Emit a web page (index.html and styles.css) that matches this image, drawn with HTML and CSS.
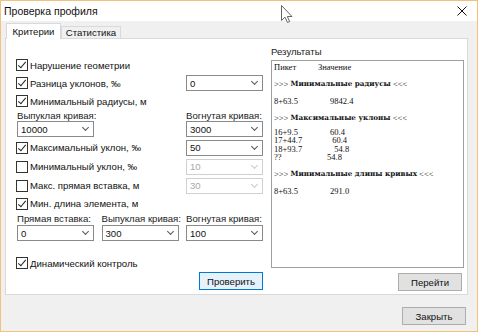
FILE: index.html
```html
<!DOCTYPE html>
<html lang="ru">
<head>
<meta charset="UTF-8">
<title>Проверка профиля</title>
<link rel="stylesheet" href="styles.css">
</head>
<body>

<div class="window">
<div class="titlebar">
<span class="title">Проверка профиля</span>
<svg class="close" width="10" height="10" viewBox="0 0 10 10"><path d="M0.5 0.5 L9.5 9.5 M9.5 0.5 L0.5 9.5" stroke="#111" stroke-width="1" fill="none"/></svg>
</div>

<div class="client">
<div class="tabs">
<div class="tab active">Критерии</div>
<div class="tab">Статистика</div>
</div>

<div class="tabpanel">
<div class="criteria">
<label class="check wide"><span class="box on"></span>Нарушение геометрии</label>

<label class="check half"><span class="box on"></span>Разница уклонов, ‰</label>
<div class="combo"><span>0</span><i class="chev"></i></div>

<label class="check wide"><span class="box on"></span>Минимальный радиусы, м</label>

<div class="caption">Выпуклая кривая:</div>
<div class="caption col3">Вогнутая кривая:</div>

<div class="combo top"><span>10000</span><i class="chev"></i></div>
<div class="combo top col3"><span>3000</span><i class="chev"></i></div>

<label class="check half"><span class="box on"></span>Максимальный уклон, ‰</label>
<div class="combo"><span>50</span><i class="chev"></i></div>

<label class="check half"><span class="box"></span>Минимальный уклон, ‰</label>
<div class="combo off"><span>10</span><i class="chev"></i></div>

<label class="check half"><span class="box"></span>Макс. прямая вставка, м</label>
<div class="combo off"><span>30</span><i class="chev"></i></div>

<label class="check wide"><span class="box on"></span>Мин. длина элемента, м</label>

<div class="caption">Прямая вставка:</div>
<div class="caption">Выпуклая кривая:</div>
<div class="caption">Вогнутая кривая:</div>

<div class="combo bottom"><span>0</span><i class="chev"></i></div>
<div class="combo bottom"><span>300</span><i class="chev"></i></div>
<div class="combo bottom"><span>100</span><i class="chev"></i></div>

<div class="spacer"></div>

<label class="check wide"><span class="box on"></span>Динамический контроль</label>

<button class="btn focus run">Проверить</button>
</div>

<div class="results">
<div class="results-title">Результаты</div>
<div class="results-box">
<div class="line head"><span class="pk">Пикет</span><span>Значение</span></div>
<div class="blank"></div>
<div class="line">&gt;&gt;&gt; <b>Минимальные радиусы</b> &lt;&lt;&lt;</div>
<div class="blank"></div>
<div class="line"><span class="pk">8+63.5</span><span>9842.4</span></div>
<div class="blank"></div>
<div class="line">&gt;&gt;&gt; <b>Максимальные уклоны</b> &lt;&lt;&lt;</div>
<div class="blank short"></div>
<div class="line"><span class="pk">16+9.5</span><span>60.4</span></div>
<div class="line"><span class="pk">17+44.7</span><span>&nbsp;60.4</span></div>
<div class="line"><span class="pk">18+93.7</span><span>&nbsp;&nbsp;54.8</span></div>
<div class="line"><span class="pk short">??</span><span>54.8</span></div>
<div class="blank"></div>
<div class="line">&gt;&gt;&gt; <b>Минимальные длины кривых</b> &lt;&lt;&lt;</div>
<div class="blank"></div>
<div class="line"><span class="pk">8+63.5</span><span>291.0</span></div>
</div>
<div class="results-actions">
<button class="btn">Перейти</button>
</div>
</div>
</div>

<div class="footer">
<button class="btn">Закрыть</button>
</div>
</div>

<svg class="cursor" width="13" height="18" viewBox="0 0 13 18"><path d="M0.5 0.5 L0.5 15.5 L4 12.2 L6.5 17.5 L8.7 16.5 L6.3 11.5 L11 11.5 Z" fill="#fff" stroke="#666" stroke-width="1"/></svg>
</div>

</body>
</html>
```

FILE: styles.css
```css
body {
margin: 0;
font-family: "Liberation Sans", Arial, sans-serif;
font-size: 9.6px;
color: #000;
}

.window {
position: relative;
width: 478px;
height: 332px;
box-sizing: border-box;
border: 1px solid #f2c27c;
background: #f0f0f0;
display: flex;
flex-direction: column;
}

.titlebar {
height: 20px;
background: #fff;
display: flex;
align-items: center;
justify-content: space-between;
padding: 0 10px 0 3px;
}

.title {
font-size: 10.5px;
color: #111;
}

.client {
flex: 1;
padding: 2px 9px 0 4px;
display: flex;
flex-direction: column;
}

.tabs {
display: flex;
align-items: flex-end;
height: 15px;
padding-left: 1px;
}

.tab {
box-sizing: border-box;
height: 12px;
line-height: 11px;
width: 60px;
text-align: center;
border: 1px solid #d9d9d9;
border-bottom: none;
background: #f0f0f0;
color: #111;
}

.tab.active {
position: relative;
z-index: 1;
width: 55px;
height: 16px;
line-height: 16px;
margin-bottom: -1px;
background: #fff;
}

.tabpanel {
box-sizing: border-box;
height: 257px;
background: #fff;
border: 1px solid #d9d9d9;
display: flex;
gap: 8px;
padding: 7px 3px 0 11px;
}

.criteria {
margin-top: 10px;
display: grid;
grid-template-columns: 77px 77px 77px;
grid-template-rows: 18px 18px 18px 11px 17px 19px 19px 19px 17px 12px 17px 13px 18px 18px;
column-gap: 7.5px;
align-items: center;
}

.check {
display: flex;
align-items: center;
gap: 2px;
white-space: nowrap;
color: #111;
}

.check.wide {
grid-column: 1 / 4;
}

.check.half {
grid-column: 1 / 3;
}

.box {
position: relative;
box-sizing: border-box;
width: 12px;
height: 12px;
margin-left: -1px;
border: 1px solid #333;
background: #fff;
}

.box.on::after {
content: "";
position: absolute;
left: 3px;
top: 0px;
width: 3px;
height: 7px;
border-right: 1.2px solid #222;
border-bottom: 1.2px solid #222;
transform: rotate(40deg);
}

.caption {
white-space: nowrap;
color: #222;
line-height: 11px;
}

.col3 {
grid-column: 3;
}

.combo {
box-sizing: border-box;
height: 16px;
border: 1px solid #8a8a8a;
background: #fff;
display: flex;
align-items: center;
justify-content: space-between;
padding: 0 5px 0 3px;
color: #111;
}

.combo.top {
align-self: start;
}

.combo.bottom {
align-self: end;
}

.combo.off {
border-color: #d0d0d0;
color: #a8a8a8;
}

.chev {
width: 4px;
height: 4px;
border-right: 1px solid #555;
border-bottom: 1px solid #555;
transform: rotate(45deg);
margin-top: -3px;
}

.combo.off .chev {
border-color: #c8c8c8;
}

.spacer {
grid-column: 1 / 4;
}

.btn {
box-sizing: border-box;
height: 18px;
width: 64px;
padding: 0;
font-family: "Liberation Sans", Arial, sans-serif;
font-size: 9.6px;
color: #111;
background: #e1e1e1;
border: 1px solid #adadad;
}

.btn.focus {
background: #e5f1fb;
border-color: #0078d7;
}

.run {
grid-column: 3;
justify-self: end;
}

.results {
width: 193px;
display: flex;
flex-direction: column;
}

.results-title {
line-height: 12px;
color: #222;
}

.results-box {
box-sizing: border-box;
height: 208px;
margin-top: 2px;
border: 1px solid #a0a0a0;
padding: 2px 2px;
font-family: "Liberation Serif", "Times New Roman", serif;
font-size: 8.5px;
line-height: 8.5px;
color: #111;
}

.results-box b {
font-family: "DejaVu Serif", "Liberation Serif", serif;
font-size: 7.2px;
}

.line {
display: flex;
white-space: pre;
}

.pk {
width: 56px;
}

.pk.short {
width: 53px;
}

.head .pk {
width: 44px;
}

.blank {
height: 8.5px;
}

.blank.short {
height: 5px;
}

.results-actions {
display: flex;
justify-content: flex-end;
margin-top: 5px;
padding-right: 2px;
}

.footer {
display: flex;
justify-content: flex-end;
margin-top: 12px;
padding-right: 2px;
}

.cursor {
position: absolute;
left: 280px;
top: 4px;
}
```
